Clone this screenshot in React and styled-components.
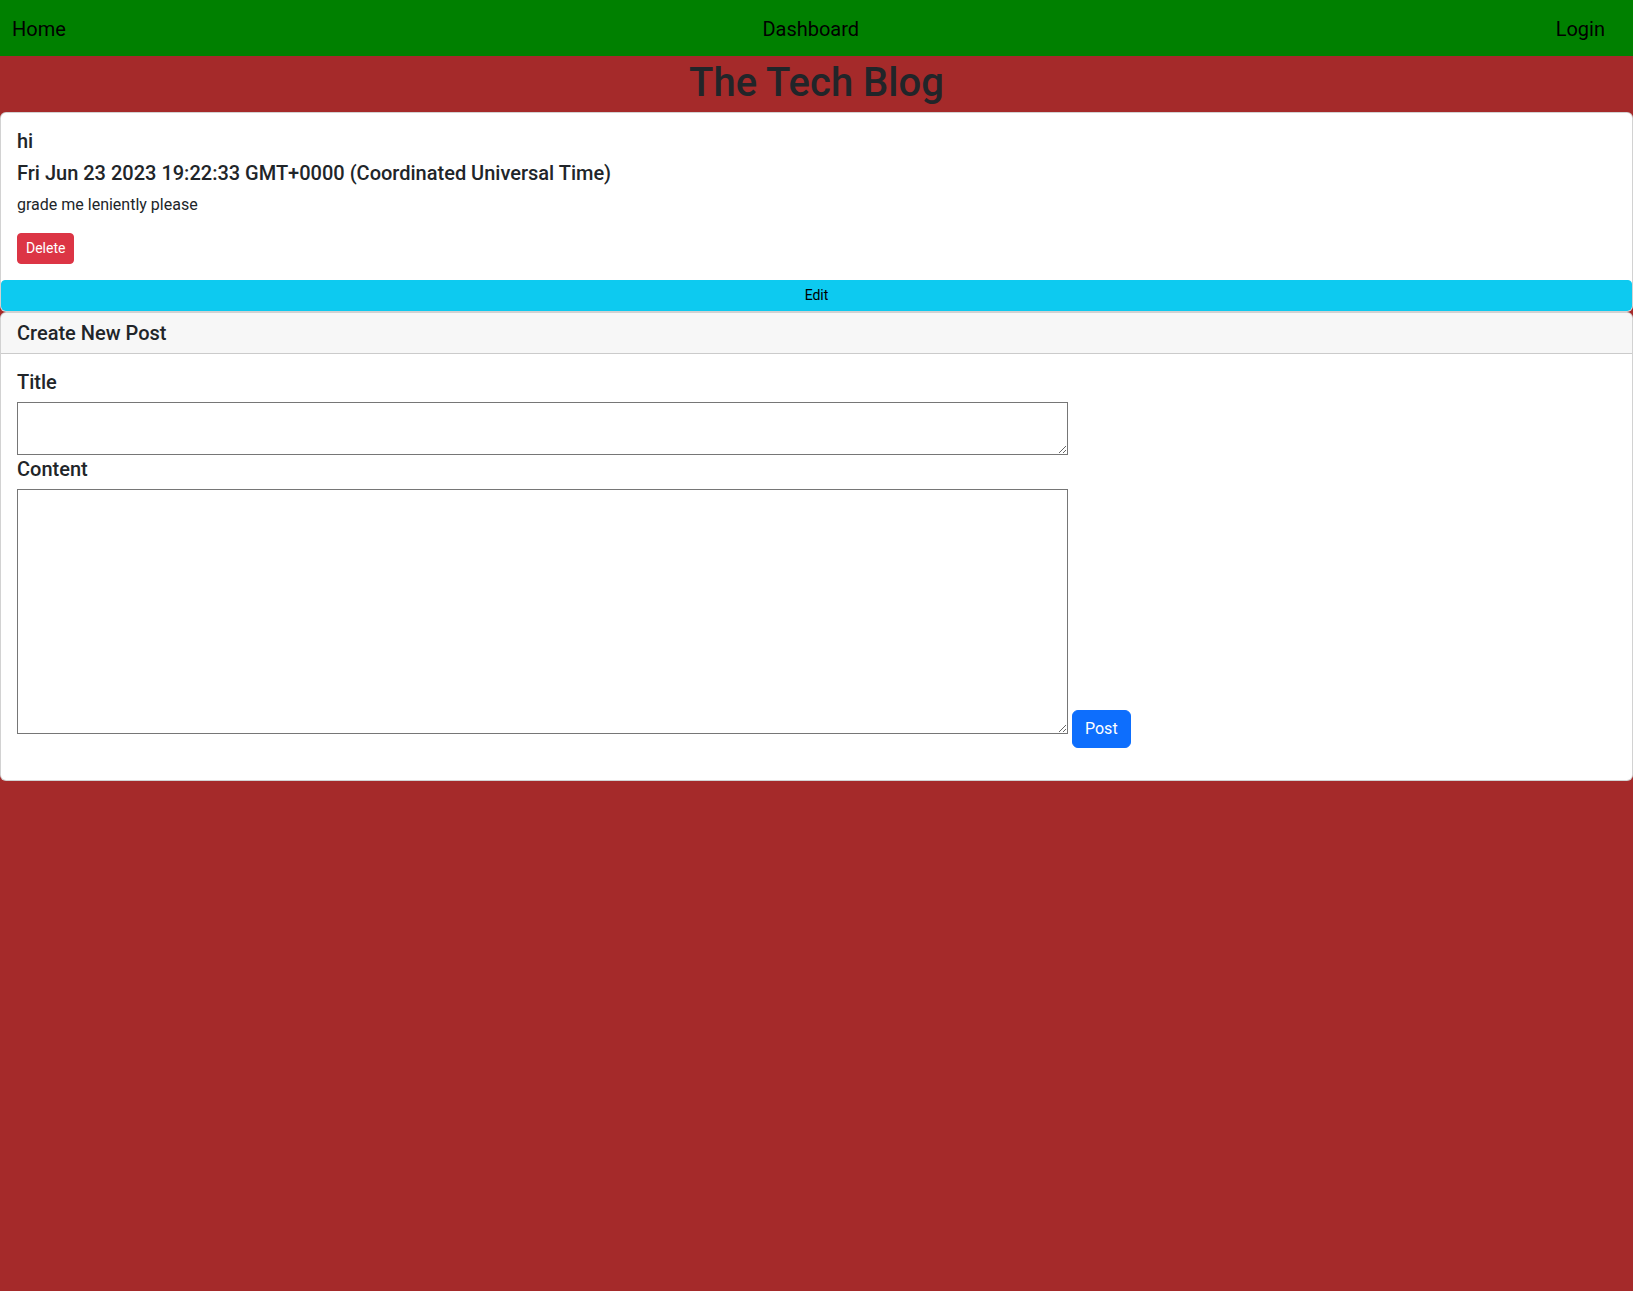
import styled, { createGlobalStyle } from 'styled-components';

const GlobalStyle = createGlobalStyle`
  *, *::before, *::after {
    box-sizing: border-box;
  }

  html, body {
    margin: 0;
    min-height: 100vh;
    background-color: #a52a2a;
    font-family: Roboto, 'Liberation Sans', Arial, sans-serif;
    font-size: 16px;
    line-height: 1.5;
    color: #212529;
  }
`;

const Nav = styled.nav`
  display: flex;
  align-items: center;
  justify-content: space-between;
  height: 56px;
  padding: 1px 28px 0 12px;
  background-color: #008000;
`;

const NavLink = styled.a`
  color: #000;
  font-size: 20px;
  line-height: 30px;
  text-decoration: none;
  cursor: pointer;
`;

const SiteTitle = styled.h1`
  margin: 0 0 5px;
  padding-top: 3px;
  font-size: 40px;
  font-weight: 500;
  line-height: 1.2;
  text-align: center;
  color: #212529;
`;

const Card = styled.div`
  display: flex;
  flex-direction: column;
  background-color: #fff;
  border: 1px solid rgba(0, 0, 0, 0.175);
  border-radius: 6px;
  overflow: hidden;
`;

const CardHeader = styled.div`
  padding: 8px 16px;
  background-color: rgba(0, 0, 0, 0.03);
  border-bottom: 1px solid rgba(0, 0, 0, 0.175);
`;

const CardBody = styled.div`
  padding: ${({ $bottom }) => ($bottom ? `16px 16px ${$bottom}px` : '16px')};
`;

const Heading = styled.h5`
  margin: 0 0 ${({ $flush }) => ($flush ? '0' : '8px')};
  font-size: 20px;
  font-weight: 500;
  line-height: 1.2;
`;

const Text = styled.p`
  margin: 0 0 16px;
  font-size: 16px;
`;

const Button = styled.button`
  display: inline-block;
  margin: 0;
  font-family: inherit;
  font-weight: 400;
  text-align: center;
  cursor: pointer;
  border: 1px solid ${({ $bg }) => $bg};
  background-color: ${({ $bg }) => $bg};
  color: ${({ $fg }) => $fg || '#fff'};
  padding: ${({ $small }) => ($small ? '4px 8px' : '6px 12px')};
  font-size: ${({ $small }) => ($small ? '14px' : '16px')};
  line-height: 1.5;
  border-radius: ${({ $small }) => ($small ? '4px' : '6px')};
`;

const EditButton = styled(Button)`
  width: 100%;
`;

const Label = styled.label`
  display: block;
  margin: ${({ $gap }) => ($gap ? `${$gap}px` : '0')} 0 8px;
  font-size: 20px;
  font-weight: 500;
  line-height: 24px;
`;

const Field = styled.textarea`
  display: ${({ $block }) => ($block ? 'block' : 'inline-block')};
  vertical-align: baseline;
  margin: 0;
  width: 1051px;
  height: ${({ $h }) => $h}px;
  border: 1px solid #767676;
  border-radius: 0;
  font-family: 'Liberation Mono', monospace;
  font-size: 13px;
`;

const PostButton = styled(Button)`
  margin-left: 4px;
  vertical-align: baseline;
`;

export default function App() {
  return (
    <>
      <GlobalStyle />
      <Nav>
        <NavLink>Home</NavLink>
        <NavLink>Dashboard</NavLink>
        <NavLink>Login</NavLink>
      </Nav>
      <SiteTitle>The Tech Blog</SiteTitle>

      <Card>
        <CardBody>
          <Heading>hi</Heading>
          <Heading>Fri Jun 23 2023 19:22:33 GMT+0000 (Coordinated Universal Time)</Heading>
          <Text>grade me leniently please</Text>
          <Button $small $bg="#dc3545">Delete</Button>
        </CardBody>
        <EditButton $small $bg="#0dcaf0" $fg="#000">Edit</EditButton>
      </Card>

      <Card>
        <CardHeader>
          <Heading $flush>Create New Post</Heading>
        </CardHeader>
        <CardBody $bottom={32}>
          <form>
            <Label htmlFor="title">Title</Label>
            <Field id="title" $block $h={53} />
            <Label htmlFor="content" $gap={2}>Content</Label>
            <Field id="content" $h={245} />
            <PostButton type="button" $bg="#0d6efd">Post</PostButton>
          </form>
        </CardBody>
      </Card>
    </>
  );
}
